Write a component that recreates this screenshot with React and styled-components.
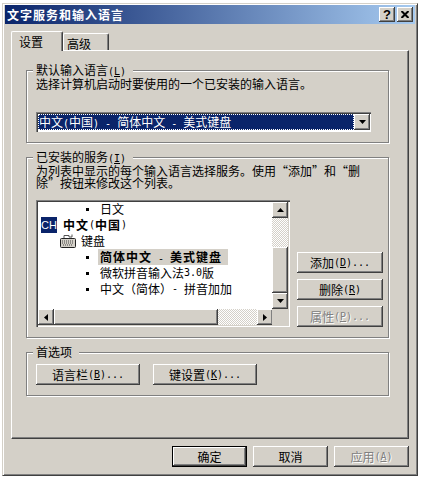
import React from "react";
import styled, { createGlobalStyle } from "styled-components";

const CJK = `"Noto Sans CJK SC", "DejaVu Sans", sans-serif`;
const Global = createGlobalStyle`
  html, body { margin: 0; padding: 0; background: #fff; }
  * { box-sizing: border-box; }
  #root { width: 424px; height: 483px; font: 12px/13px ${CJK}; color: #000; padding: 3px 6px 7px 2px; }
`;
const Win = styled.div`
  width: 416px; height: 473px; background: #d4d0c8; padding: 1px 2px 2px;
  border: 1px solid; border-color: #d4d0c8 #404040 #404040 #d4d0c8;
  box-shadow: inset 1px 1px 0 #fff, inset -1px -1px 0 #808080;
  display: flex; flex-direction: column;
`;
const Title = styled.div`
  height: 19px; flex: none; display: flex; align-items: center; justify-content: space-between;
  padding: 0 2px; background: linear-gradient(90deg, #0a246a, #a6caf0);
  color: #fff; font-weight: 700; font-size: 12px; letter-spacing: 1px;
`;
const Caps = styled.div`display: flex; gap: 2px;`;
const CapBtn = styled.div`
  width: 16px; height: 15px; background: #d4d0c8; display: flex; align-items: center; justify-content: center;
  box-shadow: inset -1px -1px 0 #404040, inset 1px 1px 0 #fff, inset -2px -2px 0 #808080;
  font: 700 13px/15px "Liberation Sans", sans-serif; letter-spacing: 0; color: #000;
`;
const Body = styled.div`flex: 1; display: flex; flex-direction: column; padding: 7px 6px 0;`;
const Tabs = styled.div`display: flex; height: 19px; flex: none; align-items: flex-end; position: relative; z-index: 1;`;
const Tab = styled.div`
  height: ${p => (p.$on ? 20 : 17)}px; width: ${p => (p.$on ? 52 : 46)}px;
  margin-bottom: ${p => (p.$on ? -1 : 0)}px; padding: 3px 0 0 ${p => (p.$on ? 7 : 3)}px; background: #d4d0c8;
  border: 1px solid; border-color: #fff #404040 transparent #fff; border-bottom: 0;
  box-shadow: inset -1px 0 0 #808080; border-radius: 2px 2px 0 0;
`;
const Page = styled.div`
  height: 389px; flex: none; padding: 19px 19px 0 14px; display: flex; flex-direction: column;
  border: 1px solid; border-color: #fff #404040 #404040 #fff;
  box-shadow: inset -1px -1px 0 #808080;
`;
const Group = styled.section`
  padding: 0 8px 0 9px; height: ${p => p.$h}px; margin-bottom: ${p => p.$mb}px; flex: none; position: relative;
  border: 1px solid #808080; box-shadow: 1px 1px 0 #fff, inset 1px 1px 0 #fff;
`;
const Legend = styled.div`
  position: absolute; top: -8px; left: 6px; background: #d4d0c8; padding: 0 7px 0 3px; line-height: 13px; white-space: pre;
`;
const Note = styled.div`margin-top: 7px; line-height: 12px; white-space: pre;`;
const Lat = styled.span`font: 10px/1 "DejaVu Sans Mono", monospace; letter-spacing: 0;`;
const Quote = styled.span`display: inline-block; width: 12px; text-align: ${p => p.$a};`;
const Combo = styled.div`
  margin-top: 22px; width: 335px; height: 20px; background: #fff; padding: 2px 1px 2px 2px; display: flex; align-items: stretch;
  box-shadow: inset 1px 1px 0 #808080, inset 2px 2px 0 #404040, inset -1px -1px 0 #fff;
`;
const ComboValue = styled.div`
  flex: 1; background: #0a246a; color: #fff; outline: 1px dotted #fff; outline-offset: -1px; line-height: 15px; padding-left: 1px; white-space: pre;
`;
const SbBtn = styled.div`
  width: 16px; height: 16px; flex: none; background: #d4d0c8; display: flex; align-items: center; justify-content: center;
  box-shadow: inset -1px -1px 0 #404040, inset 1px 1px 0 #fff, inset -2px -2px 0 #808080;
`;
const Row2 = styled.div`display: flex; margin-top: 11px; align-items: flex-end;`;
const List = styled.div`
  width: 254px; height: 127px; background: #fff; position: relative; flex: none; overflow: hidden;
  box-shadow: inset 1px 1px 0 #808080, inset 2px 2px 0 #404040, inset -1px -1px 0 #fff, inset -2px -2px 0 #d4d0c8;
  padding: 1px 0 0 3px;
`;
const Items = styled.div`height: 108px; overflow: hidden;`;
const Item = styled.div`
  height: 16px; display: flex; align-items: center; padding-left: ${p => p.$i}px; white-space: pre;
  font-weight: ${p => (p.$b ? 700 : 400)}; letter-spacing: ${p => (p.$b ? 1 : 0)}px; line-height: 16px;
`;
const Bullet = styled.span`width: 3px; height: 3px; background: #000; margin-right: 11px; flex: none;`;
const Sel = styled.span`background: #d4d0c8; height: 16px; padding: 0 6px 0 2px; margin-left: -2px;`;
const Ch = styled.span`
  width: 16px; height: 16px; flex: none; background: #0a246a; color: #fff; font: 400 11px/16px "Liberation Sans", sans-serif; letter-spacing: 0; text-align: center; margin-right: 6px; overflow: hidden;
`;
const VBar = styled.div`
  position: absolute; right: 2px; top: 2px; width: 16px; height: 107px; display: flex; flex-direction: column;
`;
const Dither = styled.div`
  flex: none; width: ${p => p.$w}; height: ${p => p.$h}; background-color: #fff; background-image: conic-gradient(#d4d0c8 25%, #fff 0 50%, #d4d0c8 0 75%, #fff 0); background-size: 2px 2px;
`;
const Thumb = styled.div`
  flex: none; width: ${p => p.$w}; height: ${p => p.$h}; background: #d4d0c8; box-shadow: inset -1px -1px 0 #404040, inset 1px 1px 0 #fff, inset -2px -2px 0 #808080;
`;
const HBar = styled.div`
  position: absolute; left: 2px; bottom: 2px; width: 235px; height: 16px; display: flex;
`;
const Corner = styled.div`position: absolute; right: 2px; bottom: 2px; width: 16px; height: 16px; background: #d4d0c8;`;
const Side = styled.div`display: flex; flex-direction: column; gap: 6px; margin-left: 7px;`;
const Btn = styled.div`
  width: ${p => p.$w}px; height: 21px; flex: none; background: #d4d0c8; display: flex; align-items: center; justify-content: center; white-space: pre;
  box-shadow: inset -1px -1px 0 #404040, inset 1px 1px 0 #fff, inset -2px -2px 0 #808080;
  color: ${p => (p.$off ? "#808080" : "#000")};
  text-shadow: ${p => (p.$off ? "1px 1px 0 #fff" : "none")};
  border: ${p => (p.$def ? "1px solid #000" : "0")};
`;
const Prefs = styled.div`display: flex; gap: 13px; padding-top: 11px;`;
const Footer = styled.div`display: flex; justify-content: flex-end; gap: 6px; margin-top: 7px;`;
const U = styled.span`text-decoration: underline;`;

const Tri = ({ d }) => {
  const pts = { up: "0,4 7,4 3.5,0", down: "0,0 7,0 3.5,4", left: "4,0 4,7 0,3.5", right: "0,0 0,7 4,3.5" }[d];
  const v = d === "up" || d === "down";
  return <svg width={v ? 7 : 4} height={v ? 4 : 7} viewBox={v ? "0 0 7 4" : "0 0 4 7"}><polygon points={pts} fill="#000" /></svg>;
};

const KeyboardIcon = styled.svg`margin-right: 5px; flex: none;`;
const Keyboard = () => (
  <KeyboardIcon width="16" height="14" viewBox="0 0 16 14">
    <path d="M4 4V1.5h5V3h3V0.5" fill="none" stroke="#555" />
    <rect x="0.5" y="4.5" width="15" height="9" rx="1" fill="#d4d0c8" stroke="#222" />
    <path d="M2 7h12M2 9h12M3 11h10" stroke="#444" strokeDasharray="1 1" />
  </KeyboardIcon>
);

const Close = () => (
  <svg width="8" height="7" viewBox="0 0 8 7"><path d="M0.5 0 7.5 7M7.5 0 0.5 7" stroke="#000" strokeWidth="2" /></svg>
);

const Q1 = () => <Quote $a="right">“</Quote>;
const Q2 = () => <Quote $a="left">”</Quote>;

export default function App() {
  return (
    <>
      <Global />
      <Win>
        <Title>
          <span>文字服务和输入语言</span>
          <Caps><CapBtn>?</CapBtn><CapBtn><Close /></CapBtn></Caps>
        </Title>
        <Body>
          <Tabs>
            <Tab $on>设置</Tab>
            <Tab>高级</Tab>
          </Tabs>
          <Page>
            <Group $h={73} $mb={14}>
              <Legend>默认输入语言<Lat>(<U>L</U>)</Lat></Legend>
              <Note>选择计算机启动时要使用的一个已安装的输入语言。</Note>
              <Combo>
                <ComboValue>中文<Lat>(</Lat>中国<Lat>) - </Lat>简体中文<Lat> - </Lat>美式键盘</ComboValue>
                <SbBtn><Tri d="down" /></SbBtn>
              </Combo>
            </Group>
            <Group $h={181} $mb={14}>
              <Legend>已安装的服务<Lat>(<U>I</U>)</Lat></Legend>
              <Note>为列表中显示的每个输入语言选择服务。使用<Q1 />添加<Q2 />和<Q1 />删<br />除<Q2 />按钮来修改这个列表。</Note>
              <Row2>
                <List>
                  <Items>
                    <Item $i={47}><Bullet />日文</Item>
                    <Item $i={2} $b><Ch>CH</Ch>中文<Lat>(</Lat>中国<Lat>)</Lat></Item>
                    <Item $i={21}><Keyboard />键盘</Item>
                    <Item $i={47} $b><Bullet /><Sel>简体中文<Lat> - </Lat>美式键盘</Sel></Item>
                    <Item $i={47}><Bullet />微软拼音输入法<Lat>3.0</Lat>版</Item>
                    <Item $i={47}><Bullet />中文（简体）<Lat>- </Lat>拼音加加</Item>
                  </Items>
                  <VBar>
                    <SbBtn><Tri d="up" /></SbBtn>
                    <Dither $w="16px" $h="29px" />
                    <Thumb $w="16px" $h="46px" />
                    <SbBtn><Tri d="down" /></SbBtn>
                  </VBar>
                  <HBar>
                    <SbBtn><Tri d="left" /></SbBtn>
                    <Thumb $w="164px" $h="16px" />
                    <Dither $w="39px" $h="16px" />
                    <SbBtn><Tri d="right" /></SbBtn>
                  </HBar>
                  <Corner />
                </List>
                <Side>
                  <Btn $w={86}>添加<Lat>(<U>D</U>)...</Lat></Btn>
                  <Btn $w={86}>删除<Lat>(<U>R</U>)</Lat></Btn>
                  <Btn $w={86} $off>属性<Lat>(<U>P</U>)...</Lat></Btn>
                </Side>
              </Row2>
            </Group>
            <Group $h={44} $mb={0}>
              <Legend>首选项</Legend>
              <Prefs>
                <Btn $w={104}>语言栏<Lat>(<U>B</U>)...</Lat></Btn>
                <Btn $w={104}>键设置<Lat>(<U>K</U>)...</Lat></Btn>
              </Prefs>
            </Group>
          </Page>
          <Footer>
            <Btn $w={75} $def>确定</Btn>
            <Btn $w={75}>取消</Btn>
            <Btn $w={75} $off>应用<Lat>(<U>A</U>)</Lat></Btn>
          </Footer>
        </Body>
      </Win>
    </>
  );
}
